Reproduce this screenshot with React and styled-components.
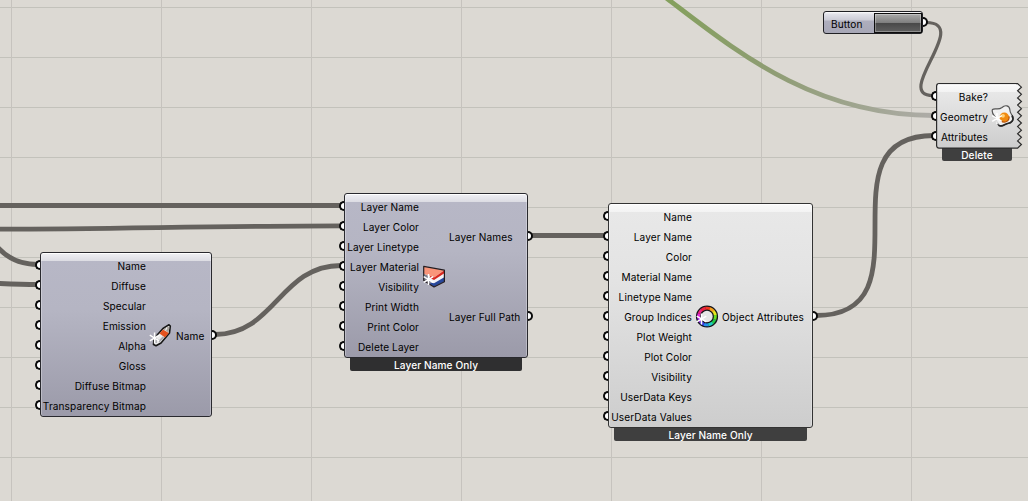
import React from 'react';
import styled, { createGlobalStyle, css } from 'styled-components';

const skins = {
  hidden: {
    fill: 'linear-gradient(180deg, #f0f0f4 0, #dcdce3 8px, #b7b7c6 8px, #b5b5c3 35%, #9b9aa9 100%)',
    edge: '#29292e',
    footer: '#2f2f30',
  },
  normal: {
    fill: 'linear-gradient(180deg, #fafafa 0, #f3f3f3 8px, #e8e8e8 8px, #e3e3e3 35%, #cdcdcd 100%)',
    edge: '#333',
    footer: '#3f3f3f',
  },
};

const nodes = [
  {
    id: 'material',
    x: 40,
    y: 252,
    width: 172,
    skin: 'hidden',
    split: 105,
    gap: 30,
    inputs: ['Name', 'Diffuse', 'Specular', 'Emission', 'Alpha', 'Gloss', 'Diffuse Bitmap', 'Transparency Bitmap'],
    outputs: ['Name'],
    icon: 'tube',
  },
  {
    id: 'layers',
    x: 344,
    y: 193,
    width: 184,
    skin: 'hidden',
    split: 74,
    gap: 30,
    inputs: ['Layer Name', 'Layer Color', 'Layer Linetype', 'Layer Material', 'Visibility', 'Print Width', 'Print Color', 'Delete Layer'],
    outputs: ['Layer Names', 'Layer Full Path'],
    icon: 'layer',
    footer: 'Layer Name Only',
  },
  {
    id: 'attributes',
    x: 608,
    y: 203,
    width: 205,
    skin: 'normal',
    split: 83,
    gap: 30,
    inputs: ['Name', 'Layer Name', 'Color', 'Material Name', 'Linetype Name', 'Group Indices', 'Plot Weight', 'Plot Color', 'Visibility', 'UserData Keys', 'UserData Values'],
    outputs: ['Object Attributes'],
    icon: 'wheel',
    footer: 'Layer Name Only',
  },
  {
    id: 'bake',
    x: 936,
    y: 83,
    width: 85,
    skin: 'normal',
    split: 51,
    gap: 30,
    inputs: ['Bake?', 'Geometry', 'Attributes'],
    outputs: [],
    icon: 'egg',
    footer: 'Delete',
    torn: true,
  },
];

const wires = [
  { d: 'M-5 205.5H341' },
  { d: 'M-5 229.2C110 229 220 225.8 341 225.8' },
  { d: 'M-8 240C4 258 20 264.5 38 264.5' },
  { d: 'M-5 283.3C10 284 24 284.5 38 284.5' },
  { d: 'M215 334.5C275 334.5 280 265.5 341 265.5' },
  { d: 'M531 235.5H606' },
  { d: 'M816 315.5C934 315.5 816 135.5 934 135.5' },
  { d: 'M926 22.5C972 22.5 892 95.5 933 95.5', width: 3.2 },
  { d: 'M665 -3C735 50 812 115.5 934 115.5', color: 'url(#geometryWire)' },
];

function Asterisk({ x, y }) {
  return (
    <path
      d="M0-5.5V5.5M-4.8-2.8L4.8 2.8M-4.8 2.8L4.8-2.8"
      transform={`translate(${x} ${y})`}
      stroke="#fff"
      strokeWidth="1.5"
      fill="none"
    />
  );
}

function TubeIcon() {
  return (
    <svg width="24" height="24" viewBox="0 0 24 24">
      <path d="M20 .8L14 4.5L5 14.5L4.5 20.5L7 21.8L12 19L20.5 9L21.3 2Z" fill="#ececec" stroke="#161616" strokeWidth="1.6" strokeLinejoin="round" />
      <path d="M14 5.5L19.8 9L16 13.5L10.5 9.5Z" fill="#e4521f" />
      <path d="M14.3 5.3L18.5 2.6L20.3 3.4L19.6 8.6Z" fill="#a9a39c" />
      <path d="M18 3.5L16.5 6.5" stroke="#eee" strokeWidth="1.2" />
      <path d="M10 17.5L14.5 13" stroke="#aaaab0" strokeWidth="1.8" />
      <path d="M7 9.5V19M3 12L11 17" stroke="#77777c" strokeWidth="1" fill="none" />
      <Asterisk x={5.6} y={14} />
    </svg>
  );
}

function LayerIcon() {
  return (
    <svg width="24" height="24" viewBox="0 0 24 24">
      <path d="M1.5 1L22.5 5.2V16.5L11.5 22L1.5 15.5Z" fill="#f2f2f6" />
      <path d="M2 1.5L22.2 5.2L12.5 12.3L2 9Z" fill="#f9957a" />
      <path d="M8 11L12.5 12.3L22 5.5V8.6L12 15L8 13Z" fill="#d8281f" />
      <path d="M9 17.5L12 18.2L22.3 12.2V16.5L12 21.8L7 19Z" fill="#28479a" />
      <path d="M2 9L7 11L9 18L7 19L2 16Z" fill="#7d7d8c" />
      <path d="M1.7 1.4L22.4 5.2V16.7L12 22L1.7 15.5Z" fill="none" stroke="#231c20" strokeWidth="1.2" strokeLinejoin="round" />
      <Asterisk x={6.5} y={14.5} />
    </svg>
  );
}

const hues = ['#f03a20', '#f3a01c', '#e6e61c', '#6adf1e', '#22c94a', '#20cfc0', '#2590ec', '#3d3de0', '#9a2ae6', '#e428d8', '#ea2283', '#ee2440'];

function WheelIcon() {
  return (
    <svg width="24" height="24" viewBox="0 0 24 24">
      <circle cx="12" cy="11.5" r="8.4" fill="#e6e6e6" stroke="#15151a" strokeWidth="5.4" />
      {hues.map((hue, i) => (
        <circle
          key={hue}
          cx="12"
          cy="11.5"
          r="8.4"
          fill="none"
          stroke={hue}
          strokeWidth="2.9"
          strokeDasharray="4.6 60"
          transform={`rotate(${i * 30 - 100} 12 11.5)`}
        />
      ))}
      <Asterisk x={6.5} y={14} />
    </svg>
  );
}

function EggIcon() {
  return (
    <svg width="24" height="24" viewBox="0 0 24 24">
      <path
        d="M1.5 4.5C4 2.5 7 5.5 11 2.5C14 -.5 18.5 .5 18.8 4.5C19 8 20 8.5 21.5 11C23.5 15.5 20.5 18 17 18.5C14 19 12.5 21.8 9 21C5.5 20 6.5 16 4.8 13C3.3 10.5 0 8 1.5 4.5Z"
        fill="#f1f1f1"
        stroke="#555"
        strokeWidth="1.2"
      />
      <path d="M7.5 20.2C12 22.5 13 19 16.5 18.5C20.5 18 23.5 15 21 10.5" fill="none" stroke="#242424" strokeWidth="1.7" />
      <circle cx="13.3" cy="12.3" r="4.8" fill="#f08a10" />
      <path d="M10 15.7A4.8 4.8 0 0 0 18 11.3" fill="none" stroke="#b95307" strokeWidth="1.2" />
      <circle cx="12" cy="10.8" r="1.9" fill="#ffd27a" />
      <Asterisk x={6} y={13.5} />
    </svg>
  );
}

const icons = { tube: TubeIcon, layer: LayerIcon, wheel: WheelIcon, egg: EggIcon };

// right-hand side of a torn component is a run of small teeth
const TEETH = 9;
const tornEdge = () => {
  const step = 64.5 / TEETH;
  let d = 'M81.6 .6H3Q.6 .6 .6 3V62.6Q.6 65.1 3 65.1H81.6';
  for (let i = 0; i < TEETH; i += 1) {
    const y = 65.1 - i * step;
    d += `L85.4 ${y - step / 2}L81.6 ${y - step}`;
  }
  return `${d}Z`;
};

function TornBody() {
  return (
    <TornShape width="87" height="67" viewBox="0 0 87 67">
      <defs>
        <linearGradient id="tornFill" x1="0" y1="0" x2="0" y2="1">
          <stop offset="0" stopColor="#fafafa" />
          <stop offset=".13" stopColor="#f3f3f3" />
          <stop offset=".13" stopColor="#e8e8e8" />
          <stop offset="1" stopColor="#cdcdcd" />
        </linearGradient>
      </defs>
      <path d={tornEdge()} fill="url(#tornFill)" stroke="#2c2c2c" strokeWidth="1.2" />
      <path d="M80 1.8H2" stroke="#fff" />
    </TornShape>
  );
}

function Wires() {
  return (
    <WireLayer width="1028" height="501">
      <defs>
        <linearGradient id="geometryWire" gradientUnits="userSpaceOnUse" x1="665" y1="0" x2="934" y2="0">
          <stop offset="0" stopColor="#84a05c" />
          <stop offset=".4" stopColor="#8f9d74" />
          <stop offset="1" stopColor="#aeaca8" />
        </linearGradient>
      </defs>
      {wires.map((wire) => (
        <path key={wire.d} d={wire.d} fill="none" stroke={wire.color || '#65625e'} strokeWidth={wire.width || 4.8} />
      ))}
    </WireLayer>
  );
}

function Node({ node }) {
  const Icon = icons[node.icon];
  return (
    <NodeBox $x={node.x} $y={node.y} $width={node.width}>
      <Body $skin={skins[node.skin]} $torn={node.torn} $split={node.split} $gap={node.gap}>
        {node.torn && <TornBody />}
        <Inputs>
          {node.inputs.map((name) => (
            <Port key={name}>
              <Grip $side="left" />
              <Label>{name}</Label>
            </Port>
          ))}
        </Inputs>
        <IconCell>
          <Icon />
        </IconCell>
        <Outputs>
          {node.outputs.map((name) => (
            <Port key={name} $grow>
              <Label>{name}</Label>
              <Grip $side="right" />
            </Port>
          ))}
        </Outputs>
      </Body>
      {node.footer && (
        <Footer $color={skins[node.skin].footer} $torn={node.torn}>
          {node.footer}
        </Footer>
      )}
    </NodeBox>
  );
}

function App() {
  return (
    <>
      <GlobalStyle />
      <Canvas>
        <Wires />
        {nodes.map((node) => (
          <Node key={node.id} node={node} />
        ))}
        <ButtonNode>
          <Label>Button</Label>
          <PushButton />
          <Grip $side="right" />
        </ButtonNode>
      </Canvas>
    </>
  );
}

const GlobalStyle = createGlobalStyle`
  body {
    margin: 0;
    overflow: hidden;
  }
`;

const Canvas = styled.main`
  position: relative;
  width: 1028px;
  height: 501px;
  overflow: hidden;
  background-color: #dcd9d3;
  background-image:
    linear-gradient(90deg, #c6c3be 1px, transparent 1px),
    linear-gradient(180deg, #c3c2bb 1px, transparent 1px);
  background-size: 150px 50px;
  background-position: 11px 7px;
  color: #000;
  font-family: Inter, "Liberation Sans", sans-serif;
  font-size: 10.1px;
  letter-spacing: 0.1px;
`;

const WireLayer = styled.svg`
  position: absolute;
  inset: 0;
`;

const NodeBox = styled.section`
  position: absolute;
  left: ${({ $x }) => $x}px;
  top: ${({ $y }) => $y}px;
  width: ${({ $width }) => $width}px;
`;

const Body = styled.div`
  position: relative;
  z-index: 1;
  box-sizing: border-box;
  display: grid;
  grid-template-columns: ${({ $split, $gap }) => `${$split}px ${$gap}px 1fr`};
  padding: 3px 0 0;
  border: 1px solid ${({ $skin }) => $skin.edge};
  border-radius: 3px;
  background: ${({ $skin }) => $skin.fill};
  box-shadow: inset 0 1px #fff, inset 1px 0 rgba(255, 255, 255, 0.3), inset -1px 0 rgba(255, 255, 255, 0.3);
  ${({ $torn }) =>
    $torn &&
    css`
      border-color: transparent;
      background: none;
      box-shadow: none;
    `}
`;

const TornShape = styled.svg`
  position: absolute;
  left: -1px;
  top: -1px;
`;

const PortList = styled.div`
  position: relative;
  display: flex;
  flex-direction: column;
`;

const Inputs = styled(PortList)`
  text-align: right;
`;

const Port = styled.div`
  position: relative;
  display: flex;
  align-items: center;
  height: 20px;
  ${({ $grow }) =>
    $grow
      ? css`
          flex: 1;
        `
      : css`
          justify-content: flex-end;
        `}
`;

const Outputs = PortList;

const Label = styled.span`
  white-space: nowrap;
  line-height: 20px;
`;

const Grip = styled.i`
  position: absolute;
  top: calc(50% - 6px);
  box-sizing: border-box;
  width: 5px;
  height: 10px;
  background: #fff;
  border: 2px solid #0b0b0b;
  ${({ $side }) =>
    $side === 'left'
      ? css`
          left: -6px;
          border-right: 0;
          border-radius: 5px 0 0 5px;
        `
      : css`
          right: -6px;
          border-left: 0;
          border-radius: 0 5px 5px 0;
        `}
`;

const IconCell = styled.div`
  position: relative;
  display: flex;
  align-items: center;
  justify-content: center;

  svg {
    display: block;
  }
`;

const Footer = styled.div`
  margin: 0 ${({ $torn }) => ($torn ? '9px' : '6px')} 0 6px;
  height: 13px;
  border-radius: 0 0 2px 2px;
  background: ${({ $color }) => $color};
  color: #fff;
  font-weight: 500;
  line-height: 15px;
  text-align: center;
`;

const ButtonNode = styled.div`
  position: absolute;
  left: 823px;
  top: 11px;
  box-sizing: border-box;
  display: flex;
  align-items: center;
  justify-content: space-between;
  width: 100px;
  height: 23px;
  padding: 1px 0 1px 7px;
  border: 1px solid #202024;
  border-radius: 3px;
  background: linear-gradient(180deg, #fff 0, #e2e2e9 2px, #ccccd6 8px, #aeaebd 9px, #a7a7b6 100%);

  ${Label} {
    padding-top: 3px;
  }
`;

const PushButton = styled.div`
  box-sizing: border-box;
  width: 48px;
  height: 20px;
  border: 1px solid #0d0d0d;
  background: linear-gradient(180deg, #aaa 0, #7e7e7e 49%, #484848 51%, #606060 100%);
  box-shadow: inset 0 0 0 1px rgba(255, 255, 255, 0.3);
`;

export default App;
